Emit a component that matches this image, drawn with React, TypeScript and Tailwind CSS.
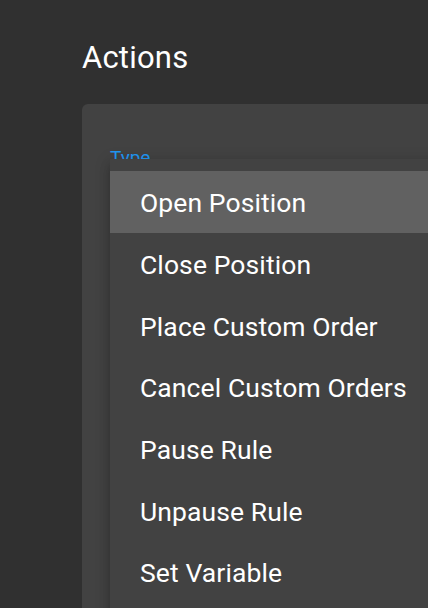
import React from 'react'

const items = [
  'Open Position',
  'Close Position',
  'Place Custom Order',
  'Cancel Custom Orders',
  'Pause Rule',
  'Unpause Rule',
  'Set Variable',
]

export default function App() {
  return (
    <div
      className="h-[608px] w-[428px] overflow-hidden bg-[#303030] pl-[82px] pt-[40px] text-white"
      style={{ fontFamily: 'Roboto, "Noto Sans", sans-serif' }}
    >
      <h1 className="text-[31px] leading-[36px] font-normal tracking-[0.2px]">Actions</h1>

      <div className="relative mt-[28px] h-[600px] w-[600px] rounded-[6px] bg-[#424242] pl-[28px] pt-[42px]">
        <div className="text-[19px] leading-[24px] text-[#2196f3]">Type</div>

        <div className="absolute left-[28px] top-[55px] w-[500px] bg-[#424242] py-[12px] shadow-[0_5px_5px_-3px_rgba(0,0,0,0.2),0_8px_10px_1px_rgba(0,0,0,0.14),0_3px_14px_2px_rgba(0,0,0,0.12)]">
          {items.map((label, i) => (
            <div
              key={label}
              className={
                i === 0
                  ? 'flex h-[61.67px] items-center bg-[#616161] pl-[30px] pt-[3px] text-[26.5px] tracking-[0.1px]'
                  : 'flex h-[61.67px] items-center pl-[30px] pt-[3px] text-[26.5px] tracking-[0.1px]'
              }
            >
              {label}
            </div>
          ))}
          <div className="h-[61.67px]" />
        </div>
      </div>
    </div>
  )
}
